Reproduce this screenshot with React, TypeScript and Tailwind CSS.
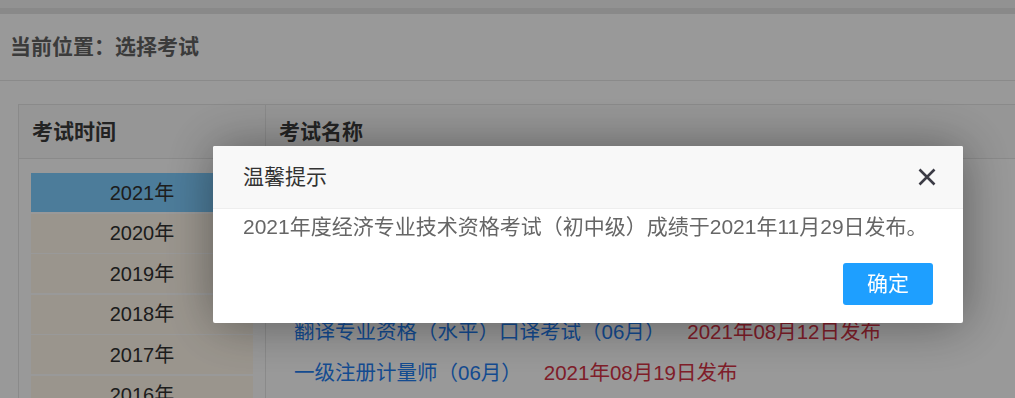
export default function App() {
  const years = ["2021年", "2020年", "2019年", "2018年", "2017年", "2016年", "2015年"];
  const exams = [
    { name: "经济专业技术资格考试（初中级）", date: "2021年11月29日发布" },
    { name: "一级建造师（09月）", date: "2021年11月25日发布" },
    { name: "翻译专业资格（水平）笔译考试（06月）", date: "2021年08月12日发布" },
    { name: "翻译专业资格（水平）口译考试（06月）", date: "2021年08月12日发布" },
    { name: "一级注册计量师（06月）", date: "2021年08月19日发布" },
  ];
  return (
    <div className="relative h-[398px] w-[1015px] overflow-hidden bg-[#dbdbdb] font-['Liberation_Sans','Noto_Sans_CJK_SC',sans-serif]">
      <div className="h-[8px] bg-[#d1d1d1]" />
      <div className="h-[6px] bg-[#c5c5c5]" />
      <div className="flex h-[67px] items-center border-b border-[#c6c6c6] pl-[10px] text-[21px] font-bold text-[#555]">
        当前位置：选择考试
      </div>
      <div className="ml-[18px] mt-[23px] flex border-l border-t border-[#c6c6c6]">
        <div className="w-[247px] shrink-0 border-r border-[#c6c6c6]">
          <div className="flex h-[54px] items-center border-b border-[#c6c6c6] bg-[#d7d7d7] pl-[13px] text-[21px] font-bold text-[#333]">
            考试时间
          </div>
          <div className="flex flex-col gap-[1.5px] pl-[12px] pr-[12px] pt-[14px]">
            {years.map((y, i) => (
              <div
                key={y}
                className={
                  i === 0
                    ? "flex h-[39px] items-center justify-center bg-[#6eb2dd] text-[20px] text-[#2a2a2a]"
                    : "flex h-[39px] items-center justify-center bg-[#ddd6cb] text-[20px] text-[#2a2a2a]"
                }
              >
                {y}
              </div>
            ))}
          </div>
        </div>
        <div className="flex-1">
          <div className="flex h-[54px] items-center border-b border-[#c6c6c6] bg-[#d7d7d7] pl-[13px] text-[21px] font-bold text-[#333]">
            考试名称
          </div>
          <div className="flex flex-col pl-[28px] pt-[30px]">
            {exams.map((e) => (
              <div key={e.name} className="flex h-[41px] items-center whitespace-nowrap text-[20.5px]">
                <span className="text-[#1c6ccf]">{e.name}</span>
                <span className="ml-[22px] text-[#b72c3b]">{e.date}</span>
              </div>
            ))}
          </div>
        </div>
      </div>

      <div className="fixed inset-0 bg-black/30" />

      <div className="fixed left-[213px] top-[146px] w-[750px] rounded-[2px] bg-white shadow-[1px_1px_50px_rgba(0,0,0,0.4)]">
        <div className="flex h-[63px] items-center justify-between rounded-t-[2px] border-b border-[#eeeeee] bg-[#f8f8f8] pl-[30px] pr-[27px]">
          <span className="text-[21px] text-[#333]">温馨提示</span>
          <svg width="18" height="18" viewBox="0 0 18 18" className="block">
            <path d="M1.5 1.5 L16.5 16.5 M16.5 1.5 L1.5 16.5" stroke="#3b3b45" strokeWidth="2.6" strokeLinecap="butt" />
          </svg>
        </div>
        <div className="whitespace-nowrap px-[30px] pt-[3px] text-[21px] leading-[30px] text-[#666]">
          2021年度经济专业技术资格考试（初中级）成绩于2021年11月29日发布。
        </div>
        <div className="flex justify-end pb-[18px] pr-[30px] pt-[21px]">
          <button className="flex h-[42px] w-[90px] items-center justify-center rounded-[3px] bg-[#1e9fff] text-[21px] text-white">
            确定
          </button>
        </div>
      </div>
    </div>
  );
}
